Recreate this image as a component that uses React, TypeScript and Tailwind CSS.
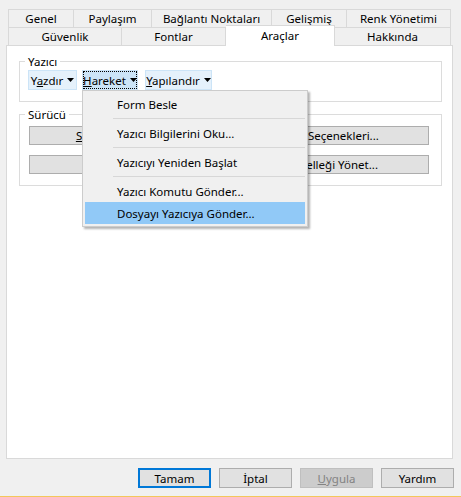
import React from 'react';

const Arrow = () => (
  <svg width="7" height="4" viewBox="0 0 7 4" className="ml-[4px] shrink-0">
    <polygon points="0,0 7,0 3.5,4" fill="#000" />
  </svg>
);

function Tab({ label, w, first }: { label: string; w: string; first?: boolean }) {
  return (
    <div
      className={`${w} h-[18px] flex items-center justify-center border-t border-r border-[#d9d9d9] bg-[#f0f0f0] ${first ? 'border-l' : ''}`}
    >
      {label}
    </div>
  );
}

function ActionButton({ w, focused, children }: { w: string; focused?: boolean; children: React.ReactNode }) {
  return (
    <div
      className={`${w} h-[20px] flex items-center justify-center border ${
        focused ? 'bg-[#cce4f7] border-[#cce4f7]' : 'bg-[#e5f1fb] border-[#cce4f7]'
      }`}
    >
      <div
        className={`h-full w-full flex items-center justify-center ${focused ? 'border border-dotted border-black' : ''}`}
      >
        {children}
        <Arrow />
      </div>
    </div>
  );
}

function DriverButton({ children }: { children: React.ReactNode }) {
  return (
    <div className="w-[197px] h-[19px] flex items-center justify-center bg-[#e1e1e1] border border-[#adadad] whitespace-nowrap overflow-hidden">
      {children}
    </div>
  );
}

function DialogButton({ children, primary, disabled }: { children: React.ReactNode; primary?: boolean; disabled?: boolean }) {
  return (
    <div
      className={`w-[73px] h-[20px] flex items-center justify-center ${
        primary
          ? 'border-2 border-[#0078d7] bg-[#e1e1e1]'
          : disabled
          ? 'border border-[#bfbfbf] bg-[#cccccc] text-[#838383]'
          : 'border border-[#adadad] bg-[#e1e1e1]'
      }`}
    >
      {children}
    </div>
  );
}

// items followed by a separator line
const menuItems = ['Form Besle', 'Yazıcı Bilgilerini Oku...', 'Yazıcıyı Yeniden Başlat'];

export default function App() {
  return (
    <div className="relative w-[461px] h-[497px] bg-[#f0f0f0] overflow-hidden text-[11.5px] leading-[15px] text-black font-['Segoe_UI','Noto_Sans',sans-serif] flex flex-col">
      {/* Tabs */}
      <div className="ml-[8px] mt-[9px] w-[443px]">
        <div className="flex">
          <Tab label="Genel" w="w-[66px]" first />
          <Tab label="Paylaşım" w="w-[78px]" />
          <Tab label="Bağlantı Noktaları" w="w-[120px]" />
          <Tab label="Gelişmiş" w="w-[75px]" />
          <Tab label="Renk Yönetimi" w="w-[104px]" />
        </div>
        <div className="flex items-end h-[18px]">
          <Tab label="Güvenlik" w="w-[114px]" first />
          <Tab label="Fontlar" w="w-[104px]" />
          <div className="relative z-10 w-[109px] h-[21px] mb-[-1px] flex items-start pt-[2px] justify-center bg-white border-t border-r border-[#d9d9d9]">
            Araçlar
          </div>
          <Tab label="Hakkında" w="w-[116px]" />
        </div>
      </div>

      {/* Panel */}
      <div className="ml-[6px] w-[447px] h-[414px] bg-white border border-[#d9d9d9] flex flex-col">
        <fieldset className="ml-[12px] mr-[10px] mt-[8px] border border-[#dcdcdc] pl-[5px] pr-[10px] pb-[11px]">
          <legend className="px-[3px] leading-[15px]">Yazıcı</legend>
          <div className="flex mt-[1px] ml-[3px]">
            <ActionButton w="w-[49px]">
              <span>
                Y<span className="underline">a</span>zdır
              </span>
            </ActionButton>
            <div className="ml-[5px]">
              <ActionButton w="w-[56px]" focused>
                <span>
                  <span className="underline">H</span>areket
                </span>
              </ActionButton>
            </div>
            <div className="ml-[7px]">
              <ActionButton w="w-[67px]">
                <span>
                  <span className="underline">Y</span>apılandır
                </span>
              </ActionButton>
            </div>
          </div>
        </fieldset>

        <fieldset className="ml-[12px] mr-[10px] mt-[5px] border border-[#dcdcdc] pl-[5px] pr-[11px] pb-[11px]">
          <legend className="px-[3px] leading-[15px]">Sürücü</legend>
          <div className="mt-[4px] ml-[4px] flex flex-col gap-[10px]">
            <div className="flex gap-[6px]">
              <DriverButton>
                <span className="underline">S</span>ürücü Özellikleri...
              </DriverButton>
              <DriverButton>Port Seçenekleri...</DriverButton>
            </div>
            <div className="flex gap-[6px]">
              <DriverButton>Sürücüyü Kaldır</DriverButton>
              <DriverButton>Önbelleği Yönet...</DriverButton>
            </div>
          </div>
        </fieldset>
      </div>

      {/* Dialog buttons */}
      <div className="flex justify-end gap-[8px] mt-[9px] mr-[7px]">
        <DialogButton primary>Tamam</DialogButton>
        <DialogButton>İptal</DialogButton>
        <DialogButton disabled>
          <span>
            <span className="underline">U</span>ygula
          </span>
        </DialogButton>
        <DialogButton>Yardım</DialogButton>
      </div>
      <div className="mt-auto h-[1px] bg-[#f3c75a]" />

      {/* Dropdown menu of Hareket */}
      <div className="absolute left-[82px] top-[90px] w-[226px] bg-[#f0f0f0] border border-[#cccccc] shadow-[2px_2px_2px_rgba(0,0,0,0.3)] py-[2px] px-[2px] z-20">
        {menuItems.map((item) => (
          <div key={item}>
            <div className="h-[22px] flex items-center pl-[32px] whitespace-nowrap">{item}</div>
            <div className="h-[7px] flex items-center pl-[28px]">
              <div className="h-px w-full bg-[#d7d7d7]" />
            </div>
          </div>
        ))}
        <div className="h-[22px] flex items-center pl-[32px] whitespace-nowrap">Yazıcı Komutu Gönder...</div>
        <div className="h-[22px] flex items-center pl-[32px] bg-[#91c9f7] whitespace-nowrap">Dosyayı Yazıcıya Gönder...</div>
      </div>
    </div>
  );
}
